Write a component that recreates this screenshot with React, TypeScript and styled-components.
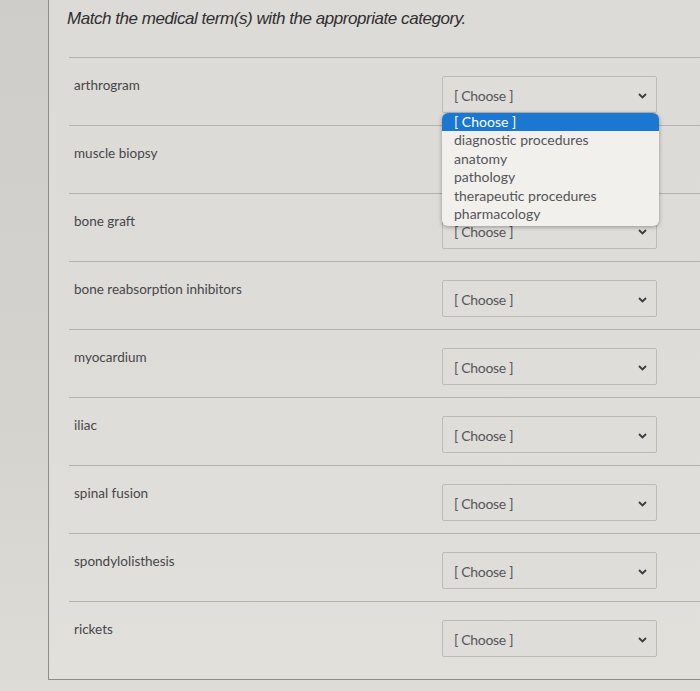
import React from "react";
import styled, { createGlobalStyle } from "styled-components";

const Global = createGlobalStyle`
  html, body { margin: 0; padding: 0; }
  body {
    background: #cfcdc9;
    font-family: Lato, "Open Sans", sans-serif;
    width: 700px;
    height: 691px;
    overflow: hidden;
  }
`;

const Page = styled.div`
  width: 700px;
  height: 691px;
  display: flex;
  flex-direction: column;
  background: linear-gradient(180deg, #cfcdc9 0%, #d5d3ce 60%, #dedcd6 100%);
`;

const Panel = styled.div`
  margin-left: 48px;
  height: 680px;
  box-sizing: border-box;
  border-left: 1px solid #8f8d89;
  border-bottom: 1px solid #8f8d89;
  background: linear-gradient(180deg, #dddbd7 0%, #dedcd8 50%, #e2e0db 100%);
  display: flex;
  flex-direction: column;
`;

const Title = styled.h1`
  margin: 0;
  padding: 9px 0 0 18px;
  height: 57px;
  box-sizing: border-box;
  font-family: "Liberation Sans", Arial, sans-serif;
  font-style: italic;
  font-weight: 400;
  font-size: 17px;
  color: #2f2f31;
  letter-spacing: -0.45px;
`;

const Rows = styled.div`
  margin-left: 20px;
  display: flex;
  flex-direction: column;
`;

const Row = styled.div`
  position: relative;
  height: 68px;
  box-sizing: border-box;
  border-top: 1px solid #b4b2ae;
  padding: 18px 43px 0 5px;
  display: grid;
  grid-template-columns: 1fr 215px;
  align-items: start;
`;

const Label = styled.div`
  font-size: 13.5px;
  line-height: 18px;
  color: #46464a;
`;

const Select = styled.div`
  height: 37px;
  box-sizing: border-box;
  border: 1px solid #bdbbb7;
  border-radius: 2px;
  background: #dfddd9;
  display: flex;
  align-items: center;
  justify-content: space-between;
  padding: 2px 9px 0 11px;
  font-size: 14px;
  letter-spacing: -0.3px;
  color: #55555a;
`;

const Chevron = () => (
  <svg width="9" height="6" viewBox="0 0 9 6" aria-hidden>
    <path d="M1 1l3.5 3.5L8 1" fill="none" stroke="#3b3b40" strokeWidth="1.8" />
  </svg>
);

const Menu = styled.ul`
  position: absolute;
  top: 55px;
  left: 373px;
  width: 217px;
  margin: 0;
  padding: 0 0 3px 0;
  list-style: none;
  background: #f1f0ec;
  border-radius: 6px;
  box-shadow: 0 1px 4px rgba(0, 0, 0, 0.35);
  z-index: 5;
  overflow: hidden;
`;

const Item = styled.li<{ $active?: boolean }>`
  font-size: 14px;
  line-height: 18.4px;
  padding-left: 12px;
  color: ${(p) => (p.$active ? "#ffffff" : "#55555a")};
  background: ${(p) => (p.$active ? "#1a78d2" : "transparent")};
`;

const terms = [
  "arthrogram",
  "muscle biopsy",
  "bone graft",
  "bone reabsorption inhibitors",
  "myocardium",
  "iliac",
  "spinal fusion",
  "spondylolisthesis",
  "rickets",
];

const options = [
  "[ Choose ]",
  "diagnostic procedures",
  "anatomy",
  "pathology",
  "therapeutic procedures",
  "pharmacology",
];

export default function App() {
  return (
    <>
      <Global />
      <Page>
        <Panel>
          <Title>Match the medical term(s) with the appropriate category.</Title>
          <Rows>
            {terms.map((t, i) => (
              <Row key={t}>
                <Label>{t}</Label>
                <Select>
                  <span>[ Choose ]</span>
                  <Chevron />
                </Select>
                {i === 0 && (
                  <Menu>
                    {options.map((o, j) => (
                      <Item key={o} $active={j === 0}>
                        {o}
                      </Item>
                    ))}
                  </Menu>
                )}
              </Row>
            ))}
          </Rows>
        </Panel>
      </Page>
    </>
  );
}
